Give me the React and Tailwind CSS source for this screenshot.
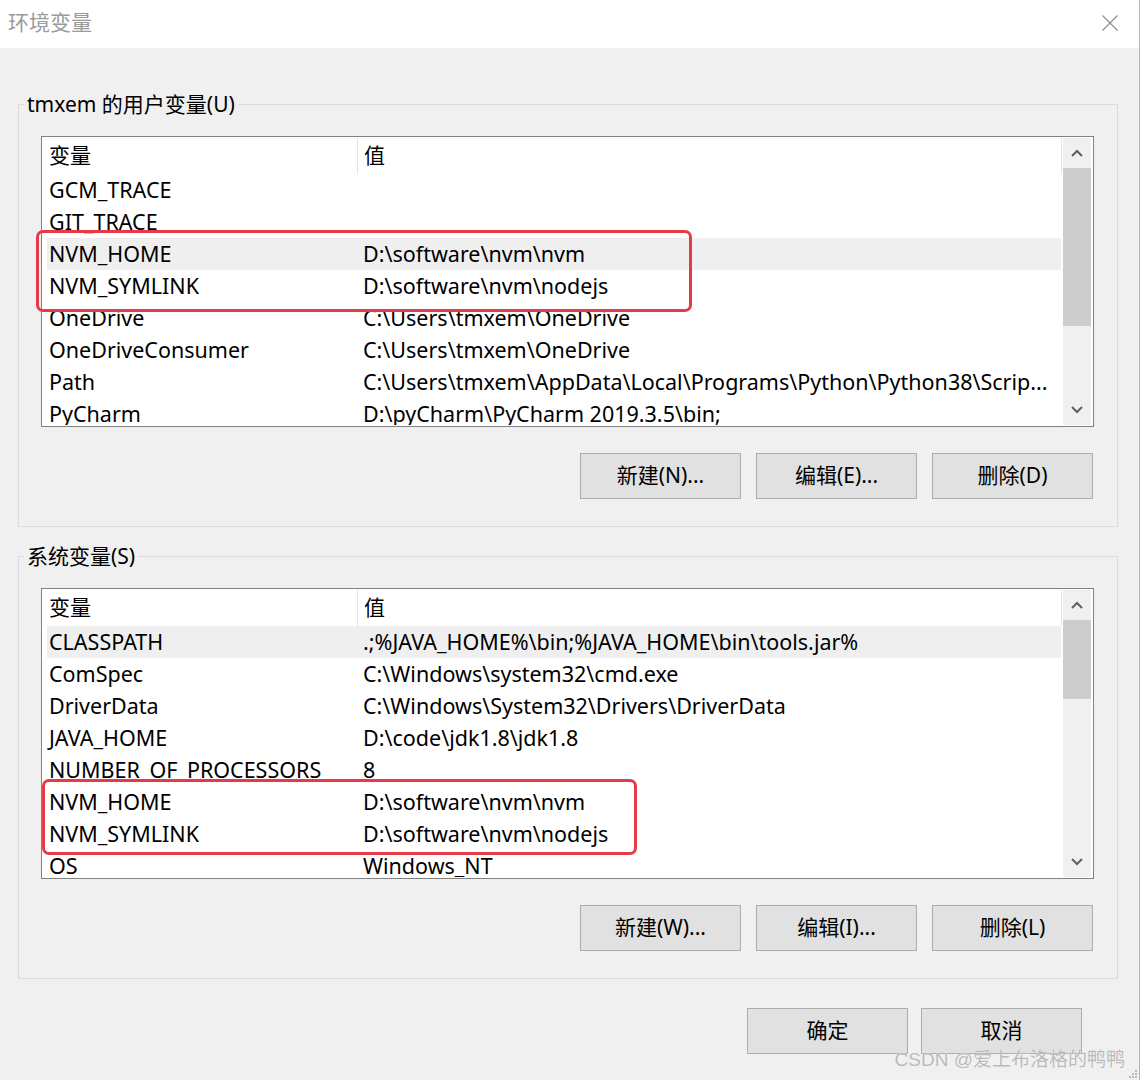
import React from 'react';

const userVars = [
  ['GCM_TRACE', ''],
  ['GIT_TRACE', ''],
  ['NVM_HOME', 'D:\\software\\nvm\\nvm', true],
  ['NVM_SYMLINK', 'D:\\software\\nvm\\nodejs'],
  ['OneDrive', 'C:\\Users\\tmxem\\OneDrive'],
  ['OneDriveConsumer', 'C:\\Users\\tmxem\\OneDrive'],
  ['Path', 'C:\\Users\\tmxem\\AppData\\Local\\Programs\\Python\\Python38\\Scrip...'],
  ['PyCharm', 'D:\\pyCharm\\PyCharm 2019.3.5\\bin;'],
];

const sysVars = [
  ['CLASSPATH', '.;%JAVA_HOME%\\bin;%JAVA_HOME\\bin\\tools.jar%', true],
  ['ComSpec', 'C:\\Windows\\system32\\cmd.exe'],
  ['DriverData', 'C:\\Windows\\System32\\Drivers\\DriverData'],
  ['JAVA_HOME', 'D:\\code\\jdk1.8\\jdk1.8'],
  ['NUMBER_OF_PROCESSORS', '8'],
  ['NVM_HOME', 'D:\\software\\nvm\\nvm'],
  ['NVM_SYMLINK', 'D:\\software\\nvm\\nodejs'],
  ['OS', 'Windows_NT'],
];

function Chevron({ up }) {
  return (
    <svg width="12" height="8" viewBox="0 0 12 8">
      <polyline
        points={up ? '1,7 6,2 11,7' : '1,1 6,6 11,1'}
        fill="none"
        stroke="#606060"
        strokeWidth="2"
      />
    </svg>
  );
}

function VarList({ rows, thumbHeight, box }) {
  return (
    <div className="relative h-[291px] border border-[#828282] bg-white p-[1px] flex text-[21.5px]">
      <div className="flex-1 flex flex-col overflow-hidden">
        <div className="h-[36px] shrink-0 flex items-center text-[21px]">
          <div className="w-[314px] h-full pl-[6px] flex items-center">变量</div>
          <div className="w-px h-full bg-[#e5e5e5]" />
          <div className="flex-1 h-full pl-[6px] flex items-center">值</div>
          <div className="w-px h-full bg-[#e5e5e5]" />
        </div>
        {rows.map(([name, value, hl]) => (
          <div
            key={name}
            className={`h-[32px] shrink-0 ml-[4px] mr-[1px] flex items-center whitespace-nowrap ${hl ? 'bg-[#efefef]' : ''}`}
          >
            <div className="w-[316px] pl-[2px]">{name}</div>
            <div>{value}</div>
          </div>
        ))}
      </div>
      {/* scrollbar */}
      <div className="w-[28px] ml-[1px] mr-[1px] bg-[#f0f0f0] flex flex-col">
        <div className="h-[30px] shrink-0 flex items-center justify-center">
          <Chevron up />
        </div>
        <div className="flex-1">
          <div className="bg-[#cdcdcd]" style={{ height: thumbHeight }} />
        </div>
        <div className="h-[30px] shrink-0 flex items-center justify-center">
          <Chevron />
        </div>
      </div>
      {/* red highlight drawn over the screenshot */}
      <div
        className="absolute border-[3px] border-[#e63a48] rounded-[7px] pointer-events-none"
        style={box}
      />
    </div>
  );
}

function Btn({ children }) {
  return (
    <button className="w-[161px] h-[46px] bg-[#e1e1e1] border border-[#adadad] text-black">
      {children}
    </button>
  );
}

function Group({ title, children }) {
  return (
    <fieldset className="mx-[18px] w-[1100px] border border-[#dcdcdc] pl-[22px] pr-[23px] pt-[18px] pb-[27px]">
      <legend className="-ml-[17px] px-[3px] leading-[28px]">{title}</legend>
      {children}
    </fieldset>
  );
}

export default function App() {
  return (
    <div className="w-[1140px] h-[1080px] bg-[#f0f0f0] border-r border-[#b4b4b4] text-[21px] text-black font-['Noto_Sans','Noto_Sans_CJK_SC',sans-serif] relative overflow-hidden">
      <div className="h-[48px] bg-white flex items-center justify-between pl-[8px] pr-[21px]">
        <span className="text-[#9a9a9a] -mt-[3px]">环境变量</span>
        <svg width="16" height="16" viewBox="0 0 16 16" className="-mt-[3px]">
          <path d="M0.5 0.5 L15.5 15.5 M15.5 0.5 L0.5 15.5" stroke="#8a8a8a" strokeWidth="1.1" />
        </svg>
      </div>

      <div className="pt-[42px]">
        <Group title="tmxem 的用户变量(U)">
          <VarList
            rows={userVars}
            thumbHeight={158}
            box={{ left: -6, top: 93, width: 656, height: 82 }}
          />
          <div className="mt-[26px] flex justify-end gap-[15px] pr-[1px]">
            <Btn>新建(N)...</Btn>
            <Btn>编辑(E)...</Btn>
            <Btn>删除(D)</Btn>
          </div>
        </Group>

        <div className="h-[15px]" />

        <Group title="系统变量(S)">
          <VarList
            rows={sysVars}
            thumbHeight={79}
            box={{ left: 0, top: 190, width: 595, height: 76 }}
          />
          <div className="mt-[26px] flex justify-end gap-[15px] pr-[1px]">
            <Btn>新建(W)...</Btn>
            <Btn>编辑(I)...</Btn>
            <Btn>删除(L)</Btn>
          </div>
        </Group>

        <div className="mt-[29px] flex justify-end gap-[13px] pr-[57px]">
          <Btn>确定</Btn>
          <Btn>取消</Btn>
        </div>
      </div>

      <div className="absolute right-[14px] bottom-[6px] text-[19px] text-[#b9b9b9] font-['Liberation_Sans','Noto_Sans_CJK_SC',sans-serif] [text-shadow:0_0_1px_#ffffff]">
        CSDN @爱上布洛格的鸭鸭
      </div>
      <svg className="absolute right-[1px] bottom-[1px]" width="10" height="10" viewBox="0 0 10 10">
        <rect x="7" y="1" width="2" height="2" fill="#bcbcbc" />
        <rect x="4" y="4" width="2" height="2" fill="#bcbcbc" />
        <rect x="7" y="4" width="2" height="2" fill="#bcbcbc" />
        <rect x="1" y="7" width="2" height="2" fill="#bcbcbc" />
        <rect x="4" y="7" width="2" height="2" fill="#bcbcbc" />
        <rect x="7" y="7" width="2" height="2" fill="#bcbcbc" />
      </svg>
    </div>
  );
}
